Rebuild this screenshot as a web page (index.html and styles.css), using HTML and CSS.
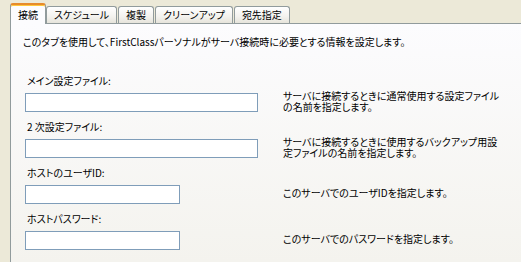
FILE: index.html
```html
<!DOCTYPE html>
<html lang="ja">
<head>
    <meta charset="UTF-8">
    <title>接続</title>
    <link rel="stylesheet" href="styles.css">
</head>
<body>
    <div class="tabs">
        <div class="tab active">接続</div>
        <div class="tab">スケジュール</div>
        <div class="tab">複製</div>
        <div class="tab">クリーンアップ</div>
        <div class="tab">宛先指定</div>
    </div>

    <div class="panel">
        <p class="intro">このタブを使用して、FirstClassパーソナルがサーバ接続時に必要とする情報を設定します。</p>

        <div class="field">
            <label for="main-file">メイン設定ファイル:</label>
            <input type="text" id="main-file" class="wide">
            <p class="desc">サーバに接続するときに通常使用する設定ファイル<br>の名前を指定します。</p>
        </div>

        <div class="field">
            <label for="sub-file">2 次設定ファイル:</label>
            <input type="text" id="sub-file" class="wide">
            <p class="desc">サーバに接続するときに使用するバックアップ用設<br>定ファイルの名前を指定します。</p>
        </div>

        <div class="field">
            <label for="host-user">ホストのユーザID:</label>
            <input type="text" id="host-user" class="narrow">
            <p class="desc">このサーバでのユーザIDを指定します。</p>
        </div>

        <div class="field">
            <label for="host-pass">ホストパスワード:</label>
            <input type="password" id="host-pass" class="narrow">
            <p class="desc">このサーバでのパスワードを指定します。</p>
        </div>
    </div>
</body>
</html>
```

FILE: styles.css
```css
html, body {
    height: 100%;
    overflow: hidden;
}
body {
    margin: 0;
    background: #ece9d8;
    font-family: "Noto Sans CJK JP", "Liberation Sans", sans-serif;
    font-size: 10px;
    font-feature-settings: "palt";
    color: #000;
    display: flex;
    flex-direction: column;
}
.tabs {
    display: flex;
    align-items: flex-end;
    height: 20px;
    padding: 3px 0 0 10px;
}
.tab {
    height: 16px;
    line-height: 16px;
    padding: 0 7px;
    margin-right: 1px;
    border: 1px solid #919b9c;
    border-bottom: none;
    border-radius: 3px 3px 0 0;
    background: linear-gradient(#ffffff, #f3f2ee 60%, #e6e4db);
}
.tab.active {
    position: relative;
    height: 19px;
    line-height: 19px;
    margin-right: 0;
    margin-bottom: -1px;
    padding: 0 7px;
    border-top: 2px solid #e68b2c;
    box-shadow: inset 0 1px 0 #ffc73c;
    background: #fcfcfe;
}
.panel {
    flex: 1;
    margin-left: 10px;
    width: 496px;
    border: 1px solid #919b9c;
    border-bottom: none;
    box-shadow: 1px 0 0 #d0cebf, 2px 0 0 #e3e0d0;
    background: linear-gradient(#fcfcfe, #f4f3ee);
    padding: 10px 0 0 14px;
}
.intro {
    margin: 0 0 23px -2px;
    line-height: 16px;
}
.field {
    display: grid;
    grid-template-columns: 233px auto;
    column-gap: 25px;
    margin-bottom: 7px;
}
.field label {
    grid-column: 1;
    line-height: 16px;
    margin: 0 0 4px 2px;
}
.field input {
    grid-column: 1;
    height: 19px;
    box-sizing: border-box;
    border: 1px solid #7f9db9;
    background: #fff;
    padding: 0 3px;
    margin: 0;
}
.field .wide {
    width: 233px;
}
.field .narrow {
    width: 155px;
}
.desc {
    grid-column: 2;
    grid-row: 2;
    align-self: center;
    margin: -5px 0 -1px;
    line-height: 11px;
    white-space: nowrap;
}
```
